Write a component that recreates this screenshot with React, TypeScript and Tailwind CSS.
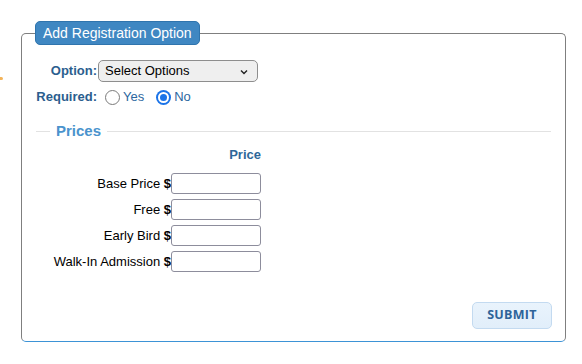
import React from "react";

const rows = ["Base Price", "Free", "Early Bird", "Walk-In Admission"];

function Radio({ checked }: { checked?: boolean }) {
  return checked ? (
    <span className="flex h-[15px] w-[15px] items-center justify-center rounded-full bg-[#1a73e8]">
      <span className="flex h-[11px] w-[11px] items-center justify-center rounded-full bg-white">
        <span className="h-[7px] w-[7px] rounded-full bg-[#1a73e8]" />
      </span>
    </span>
  ) : (
    <span className="h-[15px] w-[15px] rounded-full border border-[#7a7a7a] bg-white" />
  );
}

export default function App() {
  return (
    <div className="relative min-h-[364px] w-[582px] bg-white pl-[21px] pt-[21px] font-['Liberation_Sans',Arial,sans-serif]">
      <span className="absolute left-0 top-[77px] h-[3px] w-[3px] rounded-r-full bg-[#f3b45a]" />
      <fieldset className="w-[545px] rounded-[5px] border border-[#7f7f7f] border-b-[#3d93d6] px-0 pb-[12px]">
        <legend className="ml-[13px] h-[24px] rounded-[5px] border border-[#2f74ad] bg-[#3f87c2] px-[7px] text-[14px] leading-[22px] text-white">
          Add Registration Option
        </legend>

        <div className="mt-[15px] flex h-[22px] items-center pl-[14px]">
          <span className="w-[61px] text-right text-[13px] font-bold text-[#2b5e8e]">Option:</span>
          <div className="relative ml-[1px] flex h-[22px] w-[160px] items-center rounded-[5px] border border-[#8e8e8e] bg-[#efefef] pl-[6px] text-[13px] text-black">
            Select Options
            <svg className="absolute right-[9px] top-[8px]" width="8" height="6" viewBox="0 0 8 6">
              <path d="M1 1.5 L4 4.5 L7 1.5" fill="none" stroke="#222" strokeWidth="1.4" />
            </svg>
          </div>
        </div>

        <div className="mt-[4px] flex h-[22px] items-center pl-[14px]">
          <span className="w-[61px] text-right text-[13px] font-bold text-[#2b5e8e]">Required:</span>
          <span className="ml-[8px] flex items-center gap-[3px] text-[13px] text-[#2d67a0]">
            <Radio />
            Yes
          </span>
          <span className="ml-[12px] flex items-center gap-[3px] text-[13px] text-[#2d67a0]">
            <Radio checked />
            No
          </span>
        </div>

        <fieldset className="mx-[14px] mt-[13px] border-t border-[#e2e2e2] px-0">
          <legend className="ml-[14px] h-[20px] px-[6px] text-[15px] font-bold leading-[20px] text-[#4a93cd]">
            Prices
          </legend>
          <div className="w-[225px]">
            <div className="mt-[6px] h-[16px] text-right text-[13px] font-bold leading-[16px] text-[#2e6799]">
              Price
            </div>
            <div className="mt-[10px] flex flex-col gap-[5px]">
              {rows.map((r) => (
                <div key={r} className="flex h-[21px] items-center">
                  <span className="w-[135px] text-right text-[13px] text-black">
                    {r} <span className="font-bold">$</span>
                  </span>
                  <span className="h-[21px] w-[90px] rounded-[3px] border border-[#8d8d9c] bg-white" />
                </div>
              ))}
            </div>
          </div>
        </fieldset>

        <div className="mt-[30px] flex justify-end pr-[13px]">
          <button className="h-[27px] w-[80px] rounded-[5px] border border-[#c3daf0] bg-[linear-gradient(#e9f3fc,#e1eefa)] font-['Open_Sans',sans-serif] text-[12.5px] font-bold tracking-[0.3px] text-[#2e6399]">
            SUBMIT
          </button>
        </div>
      </fieldset>
    </div>
  );
}
